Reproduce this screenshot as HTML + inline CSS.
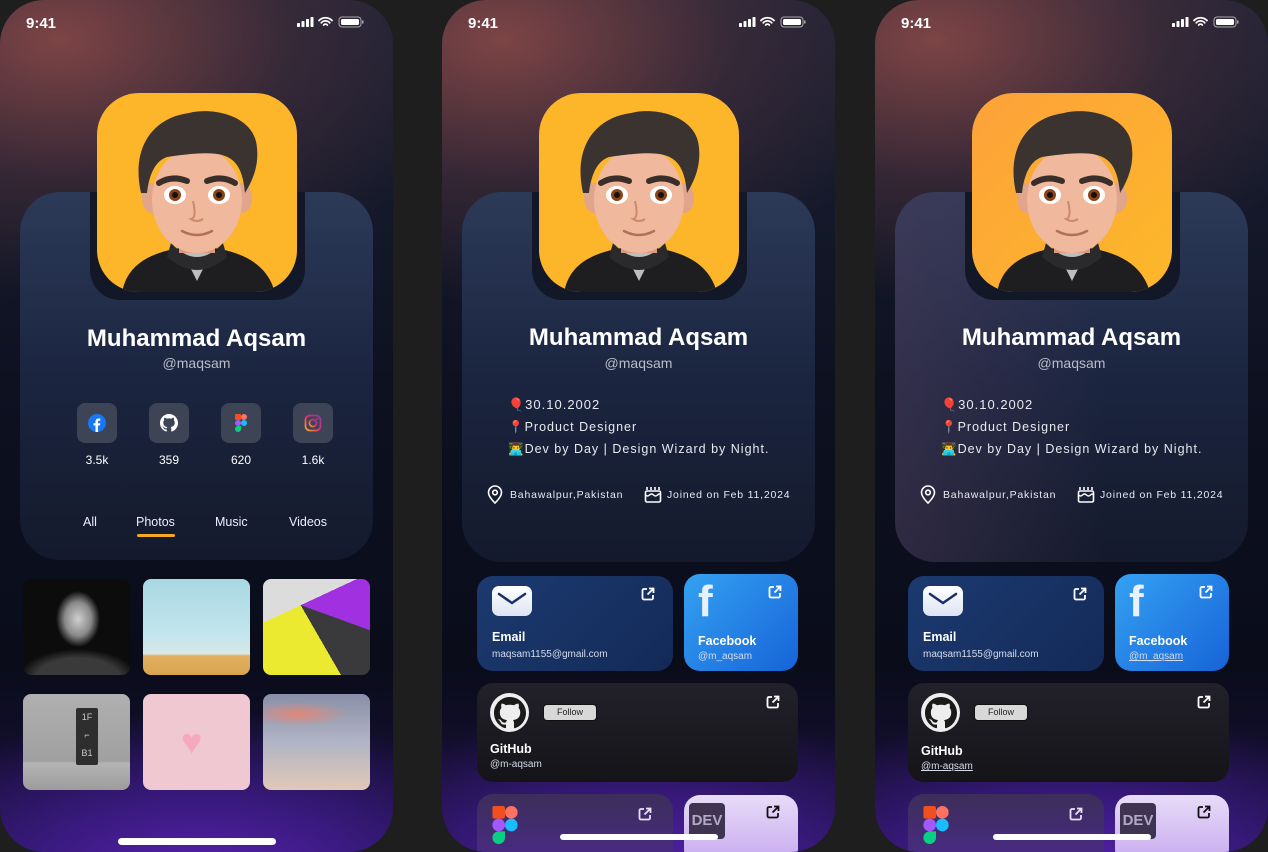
<!DOCTYPE html>
<html><head><meta charset="utf-8"><style>
*{margin:0;padding:0;box-sizing:border-box}
body{width:1268px;height:852px;background:#1e1e1e;position:relative;overflow:hidden;font-family:"Liberation Sans","Noto Sans CJK SC",sans-serif;color:#fff}
.ph{position:absolute;top:0;width:393px;height:852px;border-radius:44px;overflow:hidden;
background:radial-gradient(ellipse 420px 260px at 60px 40px,rgba(130,70,70,.95),rgba(80,50,60,.5) 55%,rgba(0,0,0,0) 100%),
radial-gradient(ellipse 360px 170px at 200px 880px,#5a22b0,#3a1a80 45%,rgba(0,0,0,0) 100%),
linear-gradient(180deg,#1d2236 0%,#0d1120 45%,#0a0c1a 78%,#1b1040 100%)}
.abs{position:absolute}
.time{left:26px;top:15px;font-size:15px;font-weight:bold}
.stat{right:28px;top:16px}
.card{left:20px;top:192px;width:353px;height:368px;border-radius:40px;background:linear-gradient(180deg,#2c3a58 0%,#1b2540 50%,#141a2c 100%)}
.frame{left:90px;top:192px;width:215px;height:108px;border-radius:0 0 30px 30px;background:#121828}
.av{left:97px;top:93px;width:200px;height:199px;border-radius:42px;overflow:hidden}
.name{left:0;width:393px;top:325px;text-align:center;font-size:24px;font-weight:bold}
.user{left:0;width:393px;top:355px;text-align:center;font-size:14px;color:#b9bdc8}
.ic{width:40px;height:40px;border-radius:8px;background:#3d4455;top:403px;display:flex;align-items:center;justify-content:center}
.cnt{top:453px;width:40px;text-align:center;font-size:12px}
.tab{top:515px;font-size:12.5px;color:#eef}
.tile{width:107px;height:96px;border-radius:8px;overflow:hidden}
.home{height:7px;width:158px;border-radius:4px;background:#fff}
.info{font-size:13px;letter-spacing:1px;color:#e8eaf0}
.small{font-size:10.5px;letter-spacing:.8px;color:#e8eaf0}
.lc{border-radius:16px}
.lt{font-size:12.5px;font-weight:bold}
.ls{font-size:10px;color:#d6dbea}
.ext{width:14px;height:14px}
</style></head><body>

<svg width="0" height="0" style="position:absolute">
<defs>
<symbol id="avatar" viewBox="0 0 200 200">
<path d="M25 200 C30 168 60 156 100 153 C140 156 170 168 178 200Z" fill="#1e1e20"/>
<path d="M86 160 L100 188 L114 160Z" fill="#bdbdbd"/>
<path d="M74 150 Q100 178 126 150 L130 164 Q100 190 70 164Z" fill="#2a2a2c"/>
<rect x="82" y="125" width="36" height="35" fill="#d89a80"/>
<ellipse cx="55" cy="105" rx="10" ry="15" fill="#e0a58a"/>
<ellipse cx="145" cy="105" rx="10" ry="15" fill="#e0a58a"/>
<ellipse cx="100" cy="107" rx="45" ry="53" fill="#f0b89c"/>
<path d="M44 100 C34 55 55 25 92 20 C115 14 158 22 160 55 C162 75 154 90 148 100 C146 78 140 66 125 62 C110 58 85 62 70 64 C58 68 52 82 50 100Z" fill="#3a3330"/>
<path d="M62 90 Q75 82 90 88" stroke="#3a2e2a" stroke-width="6" fill="none" stroke-linecap="round"/>
<path d="M110 88 Q125 82 138 90" stroke="#3a2e2a" stroke-width="6" fill="none" stroke-linecap="round"/>
<ellipse cx="78" cy="102" rx="11" ry="9" fill="#fff"/><circle cx="78" cy="102" r="6" fill="#8a4218"/><circle cx="78" cy="102" r="3" fill="#111"/>
<ellipse cx="122" cy="102" rx="11" ry="9" fill="#fff"/><circle cx="122" cy="102" r="6" fill="#8a4218"/><circle cx="122" cy="102" r="3" fill="#111"/>
<path d="M96 108 Q100 125 94 126 Q100 130 106 126" stroke="#c98a70" stroke-width="2" fill="none"/>
<path d="M85 138 Q100 146 115 138" stroke="#b0705a" stroke-width="2.5" fill="none" stroke-linecap="round"/>
</symbol>
<symbol id="ext" viewBox="0 0 14 14"><path d="M6 2H3a1.5 1.5 0 0 0-1.5 1.5v7.5A1.5 1.5 0 0 0 3 12.5h7.5A1.5 1.5 0 0 0 12 11V8" stroke="currentColor" stroke-width="1.8" fill="none"/><path d="M8 1.5h4.5V6M12.5 1.5L6.5 7.5" stroke="currentColor" stroke-width="1.8" fill="none"/></symbol>
<symbol id="stat" viewBox="0 0 68 12"><rect x="0" y="7" width="3" height="4" rx=".8" fill="#fff"/><rect x="4.5" y="5" width="3" height="6" rx=".8" fill="#fff"/><rect x="9" y="3" width="3" height="8" rx=".8" fill="#fff"/><rect x="13.5" y="1" width="3" height="10" rx=".8" fill="#fff"/><path d="M22 4.5a9 9 0 0 1 13 0M24.3 6.8a5.5 5.5 0 0 1 8.4 0M26.7 9a2.3 2.3 0 0 1 3.6 0" stroke="#fff" stroke-width="1.8" fill="none" stroke-linecap="round"/><rect x="42" y="1" width="22" height="10" rx="3" stroke="#aaa" fill="none"/><rect x="44" y="3" width="18" height="6" rx="1.5" fill="#fff"/><rect x="65" y="4.5" width="1.5" height="3" fill="#aaa"/></symbol>
<symbol id="gh" viewBox="0 0 16 16"><path fill="currentColor" d="M8 0C3.58 0 0 3.580 0 8c0 3.54 2.29 6.53 5.47 7.59.4.07.55-.17.55-.38 0-.19-.01-.82-.01-1.490-2.01.37-2.53-.49-2.690-.94-.09-.23-.48-.94-.82-1.13-.28-.15-.68-.52-.01-.53.63-.01 1.08.58 1.23.82.72 1.21 1.87.87 2.33.66.07-.52.28-.87.51-1.07-1.78-.2-3.64-.89-3.64-3.950 0-.87.31-1.59.82-2.15-.08-.2-.36-1.02.08-2.12 0 0 .67-.21 2.2.82.64-.18 1.32-.27 2-.27.68 0 1.36.09 2 .27 1.53-1.04 2.2-.82 2.2-.82.44 1.1.16 1.92.08 2.12.51.56.82 1.27.82 2.15 0 3.07-1.87 3.75-3.65 3.95.29.25.54.73.54 1.48 0 1.07-.01 1.93-.01 2.2 0 .21.15.46.55.38A8.013 8.013 0 0016 8c0-4.42-3.58-8-8-8z"/></symbol>
<symbol id="fig" viewBox="0 0 12 18"><rect x="0" y="0" width="6" height="6" rx="3" fill="#f24e1e"/><rect x="6" y="0" width="6" height="6" rx="3" fill="#ff7262"/><rect x="0" y="0" width="6" height="6" fill="#f24e1e" rx="1"/><rect x="0" y="6" width="6" height="6" rx="3" fill="#a259ff"/><circle cx="9" cy="9" r="3" fill="#1abcfe"/><path d="M0 15a3 3 0 0 0 6 0v-3H3a3 3 0 0 0-3 3z" fill="#0acf83"/></symbol>
</defs></svg>

<!-- PHONE 1 -->
<div class="ph" style="left:0">
 <div class="abs time">9:41</div>
 <svg class="abs stat" width="68" height="12"><use href="#stat"/></svg>
 <div class="abs card"></div>
 <div class="abs frame"></div>
 <div class="abs av" style="background:#fdb52a"><svg width="200" height="200"><use href="#avatar"/></svg></div>
 <div class="abs name">Muhammad Aqsam</div>
 <div class="abs user">@maqsam</div>
 <div class="abs ic" style="left:77px"><svg width="18" height="18" viewBox="0 0 18 18"><circle cx="9" cy="9" r="9" fill="#1877f2"/><path d="M10 18v-6.5h2l.3-2.3H10V7.8c0-.7.2-1.1 1.1-1.1h1.2V4.6c-.2 0-1-.1-1.8-.1-1.8 0-3 1.1-3 3.1v1.6h-2v2.3h2V18z" fill="#fff"/></svg></div>
 <div class="abs ic" style="left:149px;color:#fff"><svg width="18" height="18"><use href="#gh"/></svg></div>
 <div class="abs ic" style="left:221px"><svg width="12" height="18"><use href="#fig"/></svg></div>
 <div class="abs ic" style="left:293px"><svg width="18" height="18" viewBox="0 0 18 18"><defs><linearGradient id="ig" x1="0" y1="1" x2="1" y2="0"><stop offset="0" stop-color="#f9a825"/><stop offset=".5" stop-color="#e1306c"/><stop offset="1" stop-color="#833ab4"/></linearGradient></defs><rect x="1.5" y="1.5" width="15" height="15" rx="4.5" stroke="url(#ig)" stroke-width="1.8" fill="none"/><circle cx="9" cy="9" r="3.5" stroke="url(#ig)" stroke-width="1.8" fill="none"/><circle cx="13.3" cy="4.7" r="1" fill="#e1306c"/></svg></div>
 <div class="abs cnt" style="left:77px">3.5k</div>
 <div class="abs cnt" style="left:149px">359</div>
 <div class="abs cnt" style="left:221px">620</div>
 <div class="abs cnt" style="left:293px">1.6k</div>
 <div class="abs tab" style="left:83px">All</div>
 <div class="abs tab" style="left:136px">Photos</div>
 <div class="abs" style="left:137px;top:534px;width:38px;height:3px;border-radius:2px;background:#f5a623"></div>
 <div class="abs tab" style="left:215px">Music</div>
 <div class="abs tab" style="left:289px">Videos</div>
 <div class="abs tile" style="left:23px;top:579px;background:radial-gradient(ellipse 22px 28px at 55px 40px,#cfcfcf,#8a8a8a 60%,rgba(0,0,0,0) 100%),radial-gradient(ellipse 60px 30px at 55px 100px,#3a3a3a,#3a3a3a 70%,rgba(0,0,0,0) 100%),#0c0c0c"></div>
 <div class="abs tile" style="left:143px;top:579px;background:linear-gradient(180deg,#a8d8e2 0%,#c4e6ee 60%,#d8e8e8 78%,#e0b060 80%,#d9a450 100%)"></div>
 <div class="abs tile" style="left:263px;top:579px;background:linear-gradient(155deg,#dcdcdc 0 30%,transparent 30%),linear-gradient(200deg,#a030e0 0 38%,transparent 38%),linear-gradient(60deg,#ecea30 0 48%,#3a3a3c 48%)"></div>
 <div class="abs tile" style="left:23px;top:694px;background:linear-gradient(180deg,#b0b0b0,#a0a0a0 70%,#b4b4b4 72%,#9c9c9c)"><div class="abs" style="left:53px;top:14px;width:22px;height:57px;background:#2e2e2e;border-radius:2px;font-size:9px;color:#ccc;text-align:center;line-height:18px">1F<br>⌐<br>B1</div></div>
 <div class="abs tile" style="left:143px;top:694px;background:#efc8d2"><div class="abs" style="left:38px;top:30px;font-size:36px;color:#f5a9bf;line-height:1">♥</div></div>
 <div class="abs tile" style="left:263px;top:694px;background:radial-gradient(ellipse 50px 12px at 35px 20px,#e08878,rgba(0,0,0,0)),linear-gradient(180deg,#8a8fa8 0%,#b0b4c4 50%,#e2c8b8 100%)"></div>
 <div class="abs home" style="left:118px;top:838px"></div>
</div>

<!-- PHONE 2 -->
<div class="ph" style="left:442px">
 <div class="abs time">9:41</div>
 <svg class="abs stat" width="68" height="12"><use href="#stat"/></svg>
 <div class="abs card" style="height:370px"></div>
 <div class="abs frame"></div>
 <div class="abs av" style="background:#fdb52a"><svg width="200" height="200"><use href="#avatar"/></svg></div>
 <div class="abs name" style="top:324px">Muhammad Aqsam</div>
 <div class="abs user">@maqsam</div>
 <div class="abs info" style="left:66px;top:397px">🎈30.10.2002</div>
 <div class="abs info" style="left:66px;top:420px;font-size:12.5px">📍Product Designer</div>
 <div class="abs info" style="left:66px;top:442px;font-size:12.5px">👨‍💻Dev by Day | Design Wizard by Night.</div>
 <svg class="abs" style="left:45px;top:485px" width="16" height="19" viewBox="0 0 16 19"><path d="M8 1a6.5 6.5 0 0 1 6.5 6.5C14.5 12 8 18 8 18S1.5 12 1.5 7.5A6.5 6.5 0 0 1 8 1z" stroke="#fff" stroke-width="1.6" fill="none"/><circle cx="8" cy="7.5" r="2.3" stroke="#fff" stroke-width="1.6" fill="none"/></svg>
 <div class="abs small" style="left:68px;top:489px">Bahawalpur,Pakistan</div>
 <svg class="abs" style="left:202px;top:485px" width="18" height="18" viewBox="0 0 18 18"><path d="M3 2v3M7 2v3M11 2v3M15 2v3" stroke="#fff" stroke-width="1.6"/><rect x="1.5" y="6" width="15" height="11" rx="1.5" stroke="#fff" stroke-width="1.6" fill="none"/><path d="M1.5 10q2 2 4 0t4 0 4 0 3 0" stroke="#fff" stroke-width="1.4" fill="none"/></svg>
 <div class="abs small" style="left:225px;top:489px">Joined on Feb 11,2024</div>
 <div class="abs lc" style="left:35px;top:576px;width:196px;height:95px;background:linear-gradient(135deg,#1c3a70,#132a58)"></div>
 <div class="abs" style="left:50px;top:586px;width:40px;height:30px;border-radius:7px;background:linear-gradient(180deg,#fff,#dde3f2)"><svg width="40" height="30"><path d="M7 8l13 9 13-9" stroke="#15306a" stroke-width="2.5" fill="none" stroke-linecap="round"/></svg></div>
 <svg class="abs ext" style="left:199px;top:587px;color:#fff"><use href="#ext"/></svg>
 <div class="abs lt" style="left:50px;top:630px">Email</div>
 <div class="abs ls" style="left:50px;top:649px">maqsam1155@gmail.com</div>
 <div class="abs lc" style="left:242px;top:574px;width:114px;height:97px;background:linear-gradient(135deg,#34a2f2,#1763d8)"></div>
 <div class="abs" style="left:256px;top:580px;font-size:44px;font-weight:bold;color:#e8f2ff;line-height:1">f</div>
 <svg class="abs ext" style="left:326px;top:585px;color:#fff"><use href="#ext"/></svg>
 <div class="abs lt" style="left:256px;top:634px">Facebook</div>
 <div class="abs ls" style="left:256px;top:651px">@m_aqsam</div>
 <div class="abs lc" style="left:35px;top:683px;width:321px;height:99px;background:linear-gradient(180deg,#22212a,#141418)"></div>
 <div class="abs" style="left:48px;top:693px;width:39px;height:39px;border-radius:50%;background:#eee;color:#1a1a1a;display:flex;align-items:center;justify-content:center"><svg width="32" height="32"><use href="#gh"/></svg></div>
 <div class="abs" style="left:101px;top:704px;width:54px;height:17px;border-radius:4px;background:#d8d8d8;border:1px solid #111;color:#222;font-size:9px;text-align:center;line-height:15px">Follow</div>
 <svg class="abs ext" style="left:324px;top:695px;color:#fff"><use href="#ext"/></svg>
 <div class="abs lt" style="left:48px;top:742px">GitHub</div>
 <div class="abs ls" style="left:48px;top:759px">@m-aqsam</div>
 <div class="abs lc" style="left:35px;top:794px;width:196px;height:70px;background:linear-gradient(180deg,#3c2e5a,#4a2a88)"></div>
 <svg class="abs" style="left:50px;top:806px" width="26" height="38" viewBox="0 0 12 18"><use href="#fig"/></svg>
 <svg class="abs ext" style="left:196px;top:807px;color:#e8e0f8"><use href="#ext"/></svg>
 <div class="abs lc" style="left:242px;top:795px;width:114px;height:70px;background:linear-gradient(180deg,#e8dcf8,#c6a8ee)"></div>
 <div class="abs" style="left:247px;top:803px;width:36px;height:36px;border-radius:4px;background:#3e3452;color:#b4a8c8;font-weight:bold;font-size:15px;text-align:center;line-height:36px">DEV</div>
 <svg class="abs ext" style="left:324px;top:805px;color:#111"><use href="#ext"/></svg>
 <div class="abs home" style="left:118px;top:834px;height:6px"></div>
</div>

<!-- PHONE 3 -->
<div class="ph" style="left:875px">
 <div class="abs time">9:41</div>
 <svg class="abs stat" width="68" height="12"><use href="#stat"/></svg>
 <div class="abs card" style="height:370px;background:linear-gradient(90deg,rgba(80,60,90,.45),rgba(0,0,0,0) 60%),linear-gradient(180deg,#2c3a58 0%,#1b2540 50%,#141a2c 100%)"></div>
 <div class="abs frame"></div>
 <div class="abs av" style="background:linear-gradient(135deg,#fda23a,#fdb82a)"><svg width="200" height="200"><use href="#avatar"/></svg></div>
 <div class="abs name" style="top:324px">Muhammad Aqsam</div>
 <div class="abs user">@maqsam</div>
 <div class="abs info" style="left:66px;top:397px">🎈30.10.2002</div>
 <div class="abs info" style="left:66px;top:420px;font-size:12.5px">📍Product Designer</div>
 <div class="abs info" style="left:66px;top:442px;font-size:12.5px">👨‍💻Dev by Day | Design Wizard by Night.</div>
 <svg class="abs" style="left:45px;top:485px" width="16" height="19" viewBox="0 0 16 19"><path d="M8 1a6.5 6.5 0 0 1 6.5 6.5C14.5 12 8 18 8 18S1.5 12 1.5 7.5A6.5 6.5 0 0 1 8 1z" stroke="#fff" stroke-width="1.6" fill="none"/><circle cx="8" cy="7.5" r="2.3" stroke="#fff" stroke-width="1.6" fill="none"/></svg>
 <div class="abs small" style="left:68px;top:489px">Bahawalpur,Pakistan</div>
 <svg class="abs" style="left:202px;top:485px" width="18" height="18" viewBox="0 0 18 18"><path d="M3 2v3M7 2v3M11 2v3M15 2v3" stroke="#fff" stroke-width="1.6"/><rect x="1.5" y="6" width="15" height="11" rx="1.5" stroke="#fff" stroke-width="1.6" fill="none"/><path d="M1.5 10q2 2 4 0t4 0 4 0 3 0" stroke="#fff" stroke-width="1.4" fill="none"/></svg>
 <div class="abs small" style="left:225px;top:489px">Joined on Feb 11,2024</div>
 <div class="abs lc" style="left:33px;top:576px;width:196px;height:95px;background:linear-gradient(135deg,#1c3a70,#132a58)"></div>
 <div class="abs" style="left:48px;top:586px;width:40px;height:30px;border-radius:7px;background:linear-gradient(180deg,#fff,#dde3f2)"><svg width="40" height="30"><path d="M7 8l13 9 13-9" stroke="#15306a" stroke-width="2.5" fill="none" stroke-linecap="round"/></svg></div>
 <svg class="abs ext" style="left:198px;top:587px;color:#fff"><use href="#ext"/></svg>
 <div class="abs lt" style="left:48px;top:630px">Email</div>
 <div class="abs ls" style="left:48px;top:649px">maqsam1155@gmail.com</div>
 <div class="abs lc" style="left:240px;top:574px;width:114px;height:97px;background:linear-gradient(135deg,#34a2f2,#1763d8)"></div>
 <div class="abs" style="left:254px;top:580px;font-size:44px;font-weight:bold;color:#e8f2ff;line-height:1">f</div>
 <svg class="abs ext" style="left:324px;top:585px;color:#fff"><use href="#ext"/></svg>
 <div class="abs lt" style="left:254px;top:634px">Facebook</div>
 <div class="abs ls" style="left:254px;top:651px;text-decoration:underline">@m_aqsam</div>
 <div class="abs lc" style="left:33px;top:683px;width:321px;height:99px;background:linear-gradient(180deg,#22212a,#141418)"></div>
 <div class="abs" style="left:46px;top:693px;width:39px;height:39px;border-radius:50%;background:#eee;color:#1a1a1a;display:flex;align-items:center;justify-content:center"><svg width="32" height="32"><use href="#gh"/></svg></div>
 <div class="abs" style="left:99px;top:704px;width:54px;height:17px;border-radius:4px;background:#d8d8d8;border:1px solid #111;color:#222;font-size:9px;text-align:center;line-height:15px">Follow</div>
 <svg class="abs ext" style="left:322px;top:695px;color:#fff"><use href="#ext"/></svg>
 <div class="abs lt" style="left:46px;top:744px">GitHub</div>
 <div class="abs ls" style="left:46px;top:761px;text-decoration:underline">@m-aqsam</div>
 <div class="abs lc" style="left:33px;top:794px;width:196px;height:70px;background:linear-gradient(180deg,#3c2e5a,#4a2a88)"></div>
 <svg class="abs" style="left:48px;top:806px" width="26" height="38" viewBox="0 0 12 18"><use href="#fig"/></svg>
 <svg class="abs ext" style="left:194px;top:807px;color:#e8e0f8"><use href="#ext"/></svg>
 <div class="abs lc" style="left:240px;top:795px;width:114px;height:70px;background:linear-gradient(180deg,#e8dcf8,#c6a8ee)"></div>
 <div class="abs" style="left:245px;top:803px;width:36px;height:36px;border-radius:4px;background:#3e3452;color:#b4a8c8;font-weight:bold;font-size:15px;text-align:center;line-height:36px">DEV</div>
 <svg class="abs ext" style="left:322px;top:805px;color:#111"><use href="#ext"/></svg>
 <div class="abs home" style="left:118px;top:834px;height:6px"></div>
</div>
</body></html>
